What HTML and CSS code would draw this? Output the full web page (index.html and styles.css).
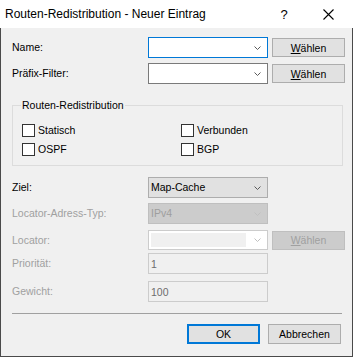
FILE: index.html
```html
<!DOCTYPE html>
<html lang="de">
<head>
  <meta charset="UTF-8">
  <title>Routen-Redistribution - Neuer Eintrag</title>
  <link rel="stylesheet" href="styles.css">
</head>
<body>

  <div class="dialog">
    <div class="titlebar">
      <span class="title">Routen-Redistribution - Neuer Eintrag</span>
      <span class="caption-btn help">?</span>
      <span class="caption-btn">
        <svg width="11" height="11" viewBox="0 0 11 11"><path d="M0.5 0.5 L10.5 10.5 M10.5 0.5 L0.5 10.5" stroke="#000" stroke-width="1.1" fill="none"/></svg>
      </span>
    </div>

    <div class="content">
      <div class="row">
        <label>Name:</label>
        <div class="combo combo-edit focused">
          <span class="value"></span>
          <svg class="chevron" width="7" height="4" viewBox="0 0 7 4"><polyline points="0.5,0.5 3.5,3.5 6.5,0.5"/></svg>
        </div>
        <button class="btn"><u>W</u>ählen</button>
      </div>

      <div class="row gap-5">
        <label>Präfix-Filter:</label>
        <div class="combo combo-edit">
          <span class="value"></span>
          <svg class="chevron" width="7" height="4" viewBox="0 0 7 4"><polyline points="0.5,0.5 3.5,3.5 6.5,0.5"/></svg>
        </div>
        <button class="btn"><u>W</u>ählen</button>
      </div>

      <div class="group">
        <span class="legend">Routen-Redistribution</span>
        <div class="checks">
          <label class="check"><span class="box"></span>Statisch</label>
          <label class="check"><span class="box"></span>Verbunden</label>
          <label class="check"><span class="box"></span>OSPF</label>
          <label class="check"><span class="box"></span>BGP</label>
        </div>
      </div>

      <div class="row ziel">
        <label>Ziel:</label>
        <div class="combo combo-list">
          <span class="value">Map-Cache</span>
          <svg class="chevron" width="7" height="4" viewBox="0 0 7 4"><polyline points="0.5,0.5 3.5,3.5 6.5,0.5"/></svg>
        </div>
      </div>

      <div class="row gap-5 disabled">
        <label>Locator-Adress-Typ:</label>
        <div class="combo combo-list">
          <span class="value">IPv4</span>
          <svg class="chevron" width="7" height="4" viewBox="0 0 7 4"><polyline points="0.5,0.5 3.5,3.5 6.5,0.5"/></svg>
        </div>
      </div>

      <div class="row short gap-6 disabled">
        <label>Locator:</label>
        <div class="combo combo-edit">
          <span class="value"></span>
          <svg class="chevron" width="7" height="4" viewBox="0 0 7 4"><polyline points="0.5,0.5 3.5,3.5 6.5,0.5"/></svg>
        </div>
        <button class="btn" disabled><u>W</u>ählen</button>
      </div>

      <div class="row gap-3 disabled">
        <label>Priorität:</label>
        <div class="textbox">1</div>
      </div>

      <div class="row gap-7 disabled">
        <label>Gewicht:</label>
        <div class="textbox">100</div>
      </div>

      <div class="separator"></div>

      <div class="footer">
        <button class="btn default">OK</button>
        <button class="btn">Abbrechen</button>
      </div>
    </div>
  </div>

</body>
</html>
```

FILE: styles.css
```css
body {
  margin: 0;
  background: #ffffff;
  font-family: 'Liberation Sans', Arial, sans-serif;
  font-size: 10.5px;
  color: #000;
}

.dialog {
  width: 353px;
  height: 357px;
  display: flex;
  flex-direction: column;
}

.titlebar {
  height: 28px;
  background: #ffffff;
  display: flex;
  align-items: center;
  padding: 0 3px 0 5px;
}

.title {
  font-size: 12px;
  flex: 1;
}

.caption-btn {
  width: 44px;
  height: 28px;
  display: flex;
  align-items: center;
  justify-content: center;
}

.help {
  font-size: 13px;
}

.content {
  flex: 1;
  background: #f0f0f0;
  border: 1px solid #4a4a4a;
  border-top: none;
  padding: 9px 11px 0;
}

.row {
  display: grid;
  grid-template-columns: 132px 120px 73px;
  column-gap: 4px;
  align-items: center;
  height: 21px;
}

.row.short { height: 20px; }

.gap-3 { margin-top: 3px; }
.gap-5 { margin-top: 5px; }
.gap-6 { margin-top: 6px; }
.gap-7 { margin-top: 7px; }
.ziel { margin-top: 11px; }

.row label {
  line-height: 13px;
}

.disabled label {
  color: #a0a0a0;
}

.combo {
  height: 100%;
  box-sizing: border-box;
  border: 1px solid #7a7a7a;
  background: #ffffff;
  display: flex;
  align-items: center;
  padding: 0 6px 0 2px;
}

.combo .value {
  flex: 1;
  line-height: 13px;
}

.chevron polyline {
  fill: none;
  stroke: #5a5a5a;
  stroke-width: 1;
}

.combo.focused {
  border-color: #0078d7;
}

.combo-list {
  background: #e1e1e1;
  border-color: #adadad;
}

.disabled .combo-list {
  background: #cccccc;
  border-color: #bfbfbf;
  color: #9e9e9e;
}

.disabled .combo-edit {
  border-color: #cccccc;
  padding-left: 2px;
}

.disabled .combo-edit .value {
  height: 14px;
  background: #f0f0f0;
  margin-right: 8px;
}

.disabled .chevron polyline {
  stroke: #c0c0c0;
}

.textbox {
  height: 100%;
  box-sizing: border-box;
  border: 1px solid #cccccc;
  background: #f0f0f0;
  color: #6d6d6d;
  padding-left: 2px;
  display: flex;
  align-items: center;
}

.btn {
  height: 19px;
  box-sizing: border-box;
  border: 1px solid #adadad;
  background: #e1e1e1;
  font-family: inherit;
  font-size: 10.5px;
  color: #000;
  padding: 0;
  width: 73px;
}

.btn:disabled {
  background: #cccccc;
  border-color: #bfbfbf;
  color: #a0a0a0;
}

.group {
  position: relative;
  width: 331px;
  box-sizing: border-box;
  margin-top: 21px;
  border: 1px solid #dcdcdc;
  padding: 18px 0 9px 9px;
}

.legend {
  position: absolute;
  top: -7px;
  left: 8px;
  padding: 0 1px;
  background: #f0f0f0;
  line-height: 13px;
}

.checks {
  display: grid;
  grid-template-columns: 159px 140px;
  row-gap: 6px;
}

.check {
  display: flex;
  align-items: center;
  height: 13px;
  line-height: 13px;
}

.box {
  width: 13px;
  height: 13px;
  box-sizing: border-box;
  border: 1px solid #333333;
  background: #ffffff;
  margin-right: 3px;
}

.separator {
  margin-top: 11px;
  height: 1px;
  width: 330px;
  background: #a0a0a0;
}

.footer {
  margin-top: 10px;
  display: flex;
  justify-content: flex-end;
  gap: 8px;
}

.footer .btn {
  height: 20px;
}

.btn.default {
  border: 2px solid #0078d7;
}
```
